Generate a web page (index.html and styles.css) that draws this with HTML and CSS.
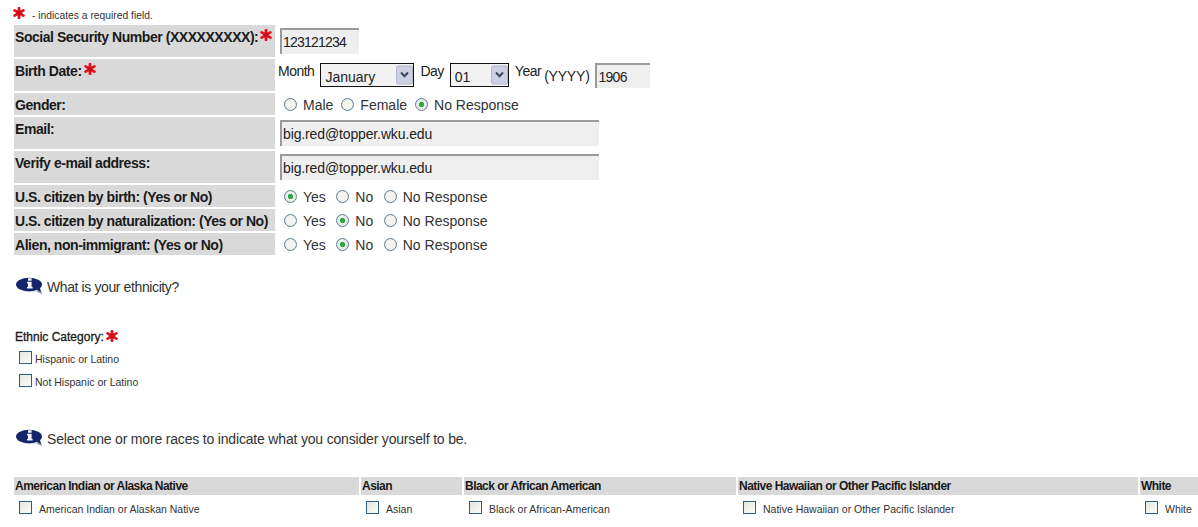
FILE: index.html
```html
<!DOCTYPE html>
<html lang="en">
<head>
<meta charset="utf-8">
<title>Application</title>
<link rel="stylesheet" href="styles.css">
</head>
<body>
<svg class="defs" width="0" height="0" aria-hidden="true">
  <defs>
    <symbol id="star" viewBox="0 0 12 12">
      <path d="M6 1.2v9.6M1.6 3.4l8.8 5.2M10.4 3.4L1.6 8.6" fill="none" stroke="#e3121f" stroke-width="2.8" stroke-linecap="round"/>
      <circle cx="6" cy="6" r="2.4" fill="#c80c18"/>
    </symbol>
    <symbol id="info" viewBox="0 0 27 18">
      <path d="M20 14.5l6.5 3-2-5.5z" fill="#a9aebb"/>
      <ellipse cx="13.5" cy="9" rx="12" ry="6" fill="#c5c8d2"/>
      <ellipse cx="13" cy="7.5" rx="13" ry="6.8" fill="#14246b"/>
      <path d="M18 11l7 4.6-1.5-6.5z" fill="#14246b"/>
      <path d="M12 1.2h3.6v2.5H12zM11 4.8h4.6v5h1v1.6h-5.6V9.8h1V6.4h-1z" fill="#f2f4fa"/>
    </symbol>
    <symbol id="arrow" viewBox="0 0 17 19">
      <rect x=".5" y=".5" width="16" height="18" rx="1.5" fill="#ccd0e2" stroke="#b1b6cc"/>
      <path d="M5 7l3.5 3.8L12 7" fill="none" stroke="#3c4560" stroke-width="2"/>
    </symbol>
  </defs>
</svg>

<p class="legend"><svg class="star legend-star"><use href="#star"/></svg><span>- indicates a required field.</span></p>

<div class="form-grid">
  <div class="label">Social Security Number (XXXXXXXXX):<svg class="star"><use href="#star"/></svg></div>
  <div class="value"><input class="field digits ssn" type="text" value="123121234"></div>

  <div class="label">Birth Date:<svg class="star"><use href="#star"/></svg></div>
  <div class="value date">
    <span class="raised">Month</span>
    <span class="select-wrap month"><select class="select"><option>January</option></select><svg class="arrow"><use href="#arrow"/></svg></span>
    <span class="raised">Day</span>
    <span class="select-wrap day"><select class="select"><option>01</option></select><svg class="arrow"><use href="#arrow"/></svg></span>
    <span class="raised">Year</span>
    <span class="yyyy">(YYYY)</span>
    <input class="field digits year" type="text" value="1906">
  </div>

  <div class="label">Gender:</div>
  <div class="value radios gender">
    <label><input type="radio" name="g">Male</label>
    <label><input type="radio" name="g">Female</label>
    <label><input type="radio" name="g" checked>No Response</label>
  </div>

  <div class="label label-high">Email:</div>
  <div class="value"><input class="field email" type="text" value="big.red@topper.wku.edu"></div>

  <div class="label label-high">Verify e-mail address:</div>
  <div class="value"><input class="field email" type="text" value="big.red@topper.wku.edu"></div>

  <div class="label">U.S. citizen by birth: (Yes or No)</div>
  <div class="value radios">
    <label><input type="radio" name="b" checked>Yes</label>
    <label><input type="radio" name="b">No</label>
    <label><input type="radio" name="b">No Response</label>
  </div>

  <div class="label">U.S. citizen by naturalization: (Yes or No)</div>
  <div class="value radios">
    <label><input type="radio" name="n">Yes</label>
    <label><input type="radio" name="n" checked>No</label>
    <label><input type="radio" name="n">No Response</label>
  </div>

  <div class="label">Alien, non-immigrant: (Yes or No)</div>
  <div class="value radios">
    <label><input type="radio" name="a">Yes</label>
    <label><input type="radio" name="a" checked>No</label>
    <label><input type="radio" name="a">No Response</label>
  </div>
</div>

<p class="note note-ethnicity"><svg class="info"><use href="#info"/></svg>What is your ethnicity?</p>

<div class="ethnic">
  <div class="ethnic-title">Ethnic Category:<svg class="star"><use href="#star"/></svg></div>
  <label class="ethnic-item"><input type="checkbox">Hispanic or Latino</label>
  <label class="ethnic-item"><input type="checkbox">Not Hispanic or Latino</label>
</div>

<p class="note note-race"><svg class="info"><use href="#info"/></svg>Select one or more races to indicate what you consider yourself to be.</p>

<div class="race-grid">
  <div class="race-head">American Indian or Alaska Native</div>
  <div class="race-head">Asian</div>
  <div class="race-head">Black or African American</div>
  <div class="race-head">Native Hawaiian or Other Pacific Islander</div>
  <div class="race-head">White</div>
  <label class="race-item"><input type="checkbox">American Indian or Alaskan Native</label>
  <label class="race-item"><input type="checkbox">Asian</label>
  <label class="race-item"><input type="checkbox">Black or African-American</label>
  <label class="race-item"><input type="checkbox">Native Hawaiian or Other Pacific Islander</label>
  <label class="race-item"><input type="checkbox">White</label>
</div>
</body>
</html>
```
FILE: styles.css
```css
* { box-sizing: border-box; }
html, body { overflow: hidden; }
body {
  margin: 0;
  padding: 6px 0 0 14px;
  width: 1198px;
  height: 527px;
  background: #fff;
  color: #222;
  font-family: "Liberation Sans", Arial, sans-serif;
  font-size: 14px;
}
.defs { position: absolute; }
.star { width: 12px; height: 12px; flex: none; }

.legend {
  margin: 0;
  height: 19px;
  display: flex;
  align-items: flex-start;
  font-size: 10.3px;
  color: #333;
}
.legend span { margin: 4px 0 0 7px; }
.legend-star { margin-top: 1px; margin-left: -1px; }

.form-grid {
  display: grid;
  grid-template-columns: 261px 1fr;
  column-gap: 2px;
  row-gap: 2px;
  grid-template-rows: 32px 32px 22px 32px 32px 22px 22px 22px;
}
.label {
  background: #d9d9d9;
  padding: 4px 0 0 1px;
  font-weight: bold;
  font-size: 14px;
  letter-spacing: -.45px;
  line-height: 17px;
  color: #1a1a1a;
  display: flex;
  align-items: flex-start;
  white-space: nowrap;
}
.label .star { margin: 0 0 0 2px; }
.value { display: flex; align-items: flex-start; padding: 3px 0 0 3px; white-space: nowrap; }

.field {
  height: 26px;
  margin: 0;
  padding: 0 0 0 1px;
  background: #efefef;
  border: 0;
  border-top: 2px solid #9a9a9a;
  border-left: 2px solid #9a9a9a;
  font: 14px "Liberation Sans", Arial, sans-serif;
  letter-spacing: -.13px;
  color: #222;
}
.digits { letter-spacing: -.78px; }
.ssn { width: 79px; }
.email { width: 319px; }
.year { width: 55px; height: 25px; margin: 1px 0 0 5px; padding-left: 2px; }

.date { padding: 3px 0 0 1px; }
.raised { line-height: 17px; margin-top: 1px; letter-spacing: -.5px; }
.yyyy { line-height: 17px; margin: 6px 0 0 3px; letter-spacing: -.2px; }
.select-wrap { position: relative; display: block; height: 24px; margin: 1px 6px 0 6px; }
.month { width: 94px; }
.day { width: 59px; }
.select {
  appearance: none;
  -webkit-appearance: none;
  display: block;
  width: 100%;
  height: 100%;
  margin: 0;
  padding: 3px 0 0 4px;
  border: 1px solid #111;
  border-radius: 0;
  background: #f2f2f2;
  font: 14px "Liberation Sans", Arial, sans-serif;
  color: #222;
}
.arrow { position: absolute; top: 2px; right: 1px; width: 17px; height: 20px; }

.radios { padding: 4px 0 0 7px; gap: 10.5px; line-height: 17px; color: #333; }
.gender { gap: 8px; }
.radios label { display: flex; align-items: center; }
input[type="radio"] {
  appearance: none;
  -webkit-appearance: none;
  width: 13px;
  height: 13px;
  margin: 0 6px 0 0;
  border: 1px solid #5b7f99;
  border-radius: 50%;
  background: radial-gradient(circle, #f4f4ee 55%, #dcdcd4 100%);
  position: relative;
  top: -1px;
}
input[type="radio"]:checked {
  background: radial-gradient(circle, #2fa84a 0 2.5px, #f4f4ee 3px, #dcdcd4 100%);
}
input[type="checkbox"] {
  appearance: none;
  -webkit-appearance: none;
  width: 13px;
  height: 13px;
  margin: 0;
  border: 1px solid #2f5f80;
  background: linear-gradient(135deg, #e6e6e0, #fbfbf9);
  flex: none;
  position: relative;
}

.note { margin: 0; height: 20px; display: flex; align-items: center; font-size: 14px; color: #333; }
.info { align-self: flex-start; width: 27px; height: 18px; margin: 0 4px 0 2px; flex: none; }
.note-ethnicity { margin-top: 22px; letter-spacing: -.39px; }

.ethnic { margin-top: 29px; font-size: 10.5px; color: #333; }
.ethnic-title { display: flex; align-items: flex-start; height: 21px; padding: 4px 0 0 1px; font-size: 12px; color: #1a1a1a; -webkit-text-stroke: .3px #1a1a1a; }
.ethnic-title .star { margin: 0 0 0 2px; }
.ethnic-item { display: flex; align-items: center; gap: 3px; height: 23px; padding-left: 5px; }
.ethnic-item input { top: -1px; }

.note-race { margin-top: 36px; letter-spacing: -.18px; }

.race-grid {
  margin-top: 28px;
  display: grid;
  grid-template-columns: 345px 101px 272px 400px 58px;
  column-gap: 2px;
  grid-template-rows: 18px 28px;
}
.race-head {
  background: #d9d9d9;
  padding: 1px 0 0 1px;
  font-size: 12px;
  font-weight: bold;
  letter-spacing: -.53px;
  line-height: 17px;
  color: #1a1a1a;
  white-space: nowrap;
}
.race-item { display: flex; align-items: center; gap: 7px; padding-left: 5px; font-size: 10.5px; color: #333; white-space: nowrap; }
.race-item input { top: -2px; }
```
